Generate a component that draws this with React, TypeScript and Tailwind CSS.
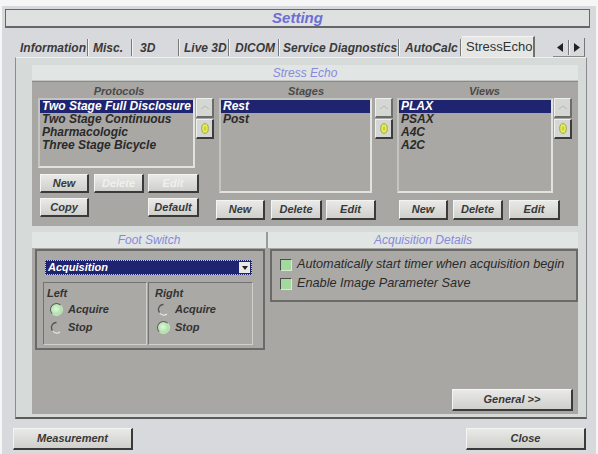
import type { ReactNode } from "react";

const tabs = [
  { label: "Information", cls: "w-[71px] pl-[2px]" },
  { label: "Misc.", cls: "w-[44px] pl-[4px]" },
  { label: "3D", cls: "w-[47px] pl-[7px]" },
  { label: "Live 3D", cls: "w-[50px] pl-[4px]" },
  { label: "DICOM", cls: "w-[50px] pl-[5px]" },
  { label: "Service Diagnostics", cls: "w-[120px] pl-[3px]" },
  { label: "AutoCalc", cls: "w-[62px] pl-[5px]" },
];

function Btn({
  children,
  className = "",
  disabled = false,
}: {
  children: ReactNode;
  className?: string;
  disabled?: boolean;
}) {
  return (
    <div
      className={`flex items-center justify-center border-t border-l border-t-[#f4f4f2] border-l-[#f4f4f2] border-r-2 border-b-2 border-r-[#3a3a3a] border-b-[#3a3a3a] bg-gradient-to-b from-[#e9e9e7] to-[#cfcfcc] text-[11px] font-bold italic whitespace-nowrap ${
        disabled ? "text-[#f0f0ee]" : "text-[#383838]"
      } ${className}`}
    >
      {children}
    </div>
  );
}

function ScrollBtns() {
  return (
    <div className="flex flex-col gap-[1px]">
      <div className="w-[18px] h-[20px] flex items-center justify-center bg-[#d4d7d3] border-t border-l border-[#eef0ee] border-r-2 border-b-2 border-r-[#6c6c6a] border-b-[#6c6c6a]">
        <svg width="10" height="8" viewBox="0 0 10 8">
          <path d="M1 5 L5 2 L9 5" fill="none" stroke="#b8bab6" strokeWidth="1" />
        </svg>
      </div>
      <div className="w-[18px] h-[20px] flex items-center justify-center bg-[#d4d7d3] border-t border-l border-[#eef0ee] border-r-2 border-b-2 border-r-[#3c3c3a] border-b-[#3c3c3a]">
        <svg width="8" height="11" viewBox="0 0 8 11">
          <ellipse cx="4" cy="5.5" rx="3.3" ry="4.8" fill="#e4ec58" stroke="#8d9a2e" strokeWidth="0.8" />
          <ellipse cx="4" cy="5.5" rx="1.2" ry="2.2" fill="#c8d038" />
        </svg>
      </div>
    </div>
  );
}

function ListBox({ items, className }: { items: string[]; className: string }) {
  return (
    <div className={`border-2 border-t-[#c4c4c0] border-l-[#c4c4c0] border-r-[#e2e2de] border-b-[#e2e2de] bg-[#a9a8a4] ${className}`}>
      {items.map((it, i) => (
        <div
          key={it}
          className={`h-[13px] leading-[13px] px-[2px] text-[12px] font-bold italic whitespace-nowrap ${
            i === 0 ? "bg-[#1f2470] text-white" : "text-[#2a2a2a]"
          }`}
        >
          {it}
        </div>
      ))}
    </div>
  );
}

function Radio({ on, label }: { on: boolean; label: string }) {
  return (
    <div className="h-[18px] flex items-center gap-[5px]">
      {on ? (
        <div className="w-[13px] h-[13px] rounded-full border border-t-[#5c5c5a] border-l-[#5c5c5a] border-r-[#c8e8c4] border-b-[#c8e8c4] bg-[radial-gradient(circle_at_45%_45%,#e2f6de,#92d48c)]" />
      ) : (
        <svg width="13" height="13" viewBox="0 0 13 13">
          <path d="M6.5 1.5 A5 5 0 0 0 2.5 9.5" fill="none" stroke="#555" strokeWidth="1.3" />
          <path d="M2.8 10 A5 5 0 0 0 10 11" fill="none" stroke="#e4e4e2" strokeWidth="1.2" />
        </svg>
      )}
      <span className="text-[11px] font-bold italic text-[#333]">{label}</span>
    </div>
  );
}

function Check({ label }: { label: string }) {
  return (
    <div className="h-[19px] flex items-center gap-[5px]">
      <div className="w-[12px] h-[12px] bg-[#a3d99c] border border-t-[#4c4c4a] border-l-[#4c4c4a] border-r-[#d6ecd2] border-b-[#d6ecd2]" />
      <span className="text-[12.7px] italic text-[#2a2a2a] whitespace-nowrap">{label}</span>
    </div>
  );
}

export default function App() {
  return (
    <div className="w-[598px] h-[454px] overflow-hidden bg-[#f6f6f7] font-['Liberation_Sans',Arial,sans-serif]">
      <div className="ml-[2px] mt-[6px] w-[594px] h-[448px] bg-[#d8d9dd]">
        {/* Title */}
        <div className="ml-[3px] pt-[3px]">
          <div className="w-[585px] h-[19px] flex items-center justify-center bg-[#dfe1e0] border border-[#666] border-b-2">
            <span className="text-[15px] font-bold italic text-[#6c6ed4]">Setting</span>
          </div>
        </div>

        {/* Tabs */}
        <div className="mt-[8px] h-[21px] pl-[16px] flex items-end">
          {tabs.map((t) => (
            <div key={t.label} className={`h-[19px] flex items-center ${t.cls}`}>
              <span className="flex-1 text-[12px] font-bold italic text-[#3a3a3a] whitespace-nowrap">{t.label}</span>
              <div className="w-[2px] h-[17px] border-l border-l-[#7a7a7a] border-r border-r-[#f2f2f2]" />
            </div>
          ))}
          <div className="w-[73px] h-[21px] pl-[4px] flex items-center bg-[#e6e7e5] border-t border-t-[#f4f4f4] border-r-2 border-r-[#707070]">
            <span className="text-[13px] text-[#333] whitespace-nowrap">StressEcho</span>
          </div>
          <div className="w-[18px]" />
          <div className="w-[32px] h-[19px] flex items-center border-b border-b-[#8a8a8a] border-r border-r-[#777]">
            <div className="flex-1 flex justify-center">
              <svg width="7" height="9" viewBox="0 0 7 9">
                <polygon points="6,0 0,4.5 6,9" fill="#222" />
              </svg>
            </div>
            <div className="w-[2px] h-[15px] border-l border-l-[#7a7a7a] border-r border-r-[#f2f2f2]" />
            <div className="flex-1 flex justify-center">
              <svg width="7" height="9" viewBox="0 0 7 9">
                <polygon points="1,0 7,4.5 1,9" fill="#222" />
              </svg>
            </div>
          </div>
        </div>

        {/* Main frame */}
        <div className="ml-[13px] w-[572px] h-[362px] bg-[#d6dad9] border-t border-t-[#eef0ef] border-l border-l-[#8c8c8c] border-r border-r-[#8a8a8a] border-b-2 border-b-[#5a5a5a] pl-[16px] pr-[8px] pt-[7px]">
          {/* Stress Echo header */}
          <div className="h-[16px] flex items-center justify-center bg-[#e1e6e4] border-b border-b-[#c2c6c4]">
            <span className="text-[12px] italic text-[#8788de]">Stress Echo</span>
          </div>

          {/* Upper gray panel */}
          <div className="h-[145px] bg-[#a8a7a3] border-t border-t-[#8a8a86] pl-[6px] pt-[2px] flex gap-[4px]">
            {/* Protocols */}
            <div className="w-[177px] flex flex-col">
              <div className="w-[162px] h-[14px] leading-[14px] text-center text-[11px] font-bold italic text-[#4a4a4a]">Protocols</div>
              <div className="flex gap-[1px]">
                <ListBox
                  className="w-[157px] h-[70px]"
                  items={["Two Stage Full Disclosure", "Two Stage Continuous", "Pharmacologic", "Three Stage Bicycle"]}
                />
                <ScrollBtns />
              </div>
              <div className="mt-[6px] ml-[2px] flex gap-[5px]">
                <Btn className="w-[49px] h-[19px]">New</Btn>
                <Btn className="w-[50px] h-[19px]" disabled>Delete</Btn>
                <Btn className="w-[51px] h-[19px] -ml-[1px]" disabled>Edit</Btn>
              </div>
              <div className="mt-[5px] ml-[2px] w-[159px] flex justify-between">
                <Btn className="w-[49px] h-[19px]">Copy</Btn>
                <Btn className="w-[51px] h-[19px]">Default</Btn>
              </div>
            </div>

            {/* Stages */}
            <div className="w-[174px] flex flex-col">
              <div className="h-[14px] leading-[14px] text-center text-[11px] font-bold italic text-[#4a4a4a]">Stages</div>
              <div className="flex gap-[3px]">
                <ListBox className="w-[154px] h-[95px]" items={["Rest", "Post"]} />
                <ScrollBtns />
              </div>
              <div className="mt-[7px] -ml-[3px] flex">
                <Btn className="w-[49px] h-[20px]">New</Btn>
                <Btn className="w-[51px] h-[20px] ml-[6px]">Delete</Btn>
                <Btn className="w-[50px] h-[20px] ml-[4px]">Edit</Btn>
              </div>
            </div>

            {/* Views */}
            <div className="w-[175px] flex flex-col">
              <div className="h-[14px] leading-[14px] text-center text-[11px] font-bold italic text-[#4a4a4a]">Views</div>
              <div className="flex gap-[1px]">
                <ListBox className="w-[156px] h-[95px]" items={["PLAX", "PSAX", "A4C", "A2C"]} />
                <ScrollBtns />
              </div>
              <div className="mt-[7px] ml-[2px] flex">
                <Btn className="w-[49px] h-[20px]">New</Btn>
                <Btn className="w-[50px] h-[20px] ml-[5px]">Delete</Btn>
                <Btn className="w-[51px] h-[20px] ml-[6px]">Edit</Btn>
              </div>
            </div>
          </div>

          {/* Lower headers */}
          <div className="mt-[6px] h-[16px] flex">
            <div className="w-[234px] flex items-center justify-center bg-[#e1e6e4]">
              <span className="text-[12px] italic text-[#8788de]">Foot Switch</span>
            </div>
            <div className="w-[2px] bg-[#9a9c9b]" />
            <div className="flex-1 flex items-center justify-center bg-[#e1e6e4]">
              <span className="text-[12px] italic text-[#8788de]">Acquisition Details</span>
            </div>
          </div>

          {/* Lower gray area */}
          <div className="h-[166px] bg-[#a8a7a3] flex">
            <div className="pl-[3px] pt-[1px]">
              <div className="w-[230px] h-[101px] border-2 border-[#6a6a68] bg-[#aaa9a5] pl-[6px] pt-[9px]">
                <div className="ml-[2px] w-[207px] h-[15px] flex items-center bg-[#1f2470] border border-dotted border-[#c6c8ea]">
                  <span className="flex-1 pl-[2px] text-[11px] font-bold italic text-white">Acquisition</span>
                  <div className="w-[11px] h-[11px] mr-[1px] bg-[#e8e8e6] flex items-center justify-center">
                    <svg width="6" height="4" viewBox="0 0 6 4">
                      <polygon points="0,0 6,0 3,4" fill="#222" />
                    </svg>
                  </div>
                </div>
                <div className="mt-[7px] flex gap-[1px]">
                  <div className="w-[104px] h-[63px] border border-t-[#727270] border-l-[#727270] border-r-[#d0d0cc] border-b-[#d0d0cc] pl-[3px] pt-[4px]">
                    <div className="h-[13px] leading-[13px] text-[11px] font-bold italic text-[#333]">Left</div>
                    <div className="pl-[3px]">
                      <Radio on label="Acquire" />
                      <Radio on={false} label="Stop" />
                    </div>
                  </div>
                  <div className="w-[105px] h-[63px] border border-t-[#727270] border-l-[#727270] border-r-[#d0d0cc] border-b-[#d0d0cc] pl-[6px] pt-[4px]">
                    <div className="h-[13px] leading-[13px] text-[11px] font-bold italic text-[#333]">Right</div>
                    <div className="pl-[2px]">
                      <Radio on={false} label="Acquire" />
                      <Radio on label="Stop" />
                    </div>
                  </div>
                </div>
              </div>
            </div>

            <div className="ml-[5px] flex-1 flex flex-col justify-between pt-[1px]">
              <div className="h-[53px] border-2 border-[#6a6a68] bg-[#aaa9a5] pl-[8px] pt-[4px]">
                <Check label="Automatically start timer when acquisition begin" />
                <Check label="Enable Image Parameter Save" />
              </div>
              <Btn className="self-end mr-[5px] mb-[3px] w-[121px] h-[22px]">General &gt;&gt;</Btn>
            </div>
          </div>
        </div>

        {/* Bottom buttons */}
        <div className="mt-[9px] pl-[11px] flex">
          <Btn className="w-[120px] h-[22px]">Measurement</Btn>
          <Btn className="w-[120px] h-[22px] ml-[333px]">Close</Btn>
        </div>
      </div>
    </div>
  );
}
